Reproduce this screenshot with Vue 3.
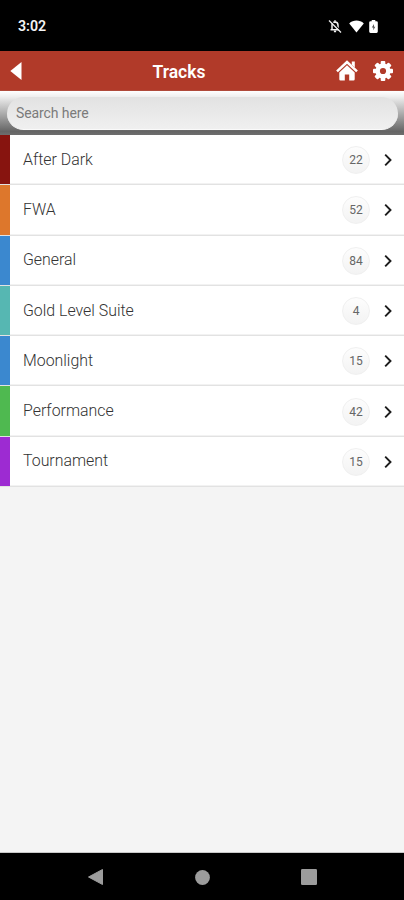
<script setup>
const tracks = [
  { name: 'After Dark', count: 22, color: '#87140f' },
  { name: 'FWA', count: 52, color: '#dd772c' },
  { name: 'General', count: 84, color: '#3b88cf' },
  { name: 'Gold Level Suite', count: 4, color: '#56b7b2' },
  { name: 'Moonlight', count: 15, color: '#3b88cf' },
  { name: 'Performance', count: 42, color: '#4fb950' },
  { name: 'Tournament', count: 15, color: '#9d2bd2' },
]
</script>

<template>
  <div class="screen">
    <div class="status">
      <span class="time">3:02</span>
      <div class="status-icons">
        <svg class="bell" viewBox="0 0 14 14" width="14" height="14">
          <path d="M2.500 10.800h9.200M4 10.500V6.200C4 4.400 5 3.200 7 3.100c2 .1 3 1.300 3 3.100v4.300M7 3.300V1.300M5.900 12.500h2.200" fill="none" stroke="#f0f0f0" stroke-width="1.500" />
          <path d="M1.800 .9l11.500 11.500" stroke="#000" stroke-width="1.300" />
          <path d="M1 1.500l12 12" stroke="#f0f0f0" stroke-width="1.200" />
        </svg>
        <svg class="wifi" viewBox="0 0 15 13" width="15" height="13">
          <path d="M.2 3.400C4.300-.4 10.700-.4 14.800 3.400L7.500 12.600z" fill="#fff" />
        </svg>
        <svg class="battery" viewBox="0 0 9 13" width="9" height="13">
          <path d="M2.700 0h3.600v1.300H7.500a1.300 1.300 0 0 1 1.300 1.300v9A1.300 1.300 0 0 1 7.500 12.900h-6A1.300 1.300 0 0 1 .2 11.600v-9a1.300 1.300 0 0 1 1.300-1.300h1.200z" fill="#fff" />
          <path d="M5 4L2.800 7.600h1.500v2.700L6.300 6.800H5z" fill="#555" />
        </svg>
      </div>
    </div>

    <header class="header">
      <svg class="back" viewBox="0 0 12 18" width="12" height="18">
        <path d="M11.500 0v18L.3 9z" fill="#fff" />
      </svg>
      <h1 class="title">Tracks</h1>
      <div class="actions">
        <svg viewBox="0 0 22 21" width="22" height="21">
          <path d="M1 11.400L11 2l10 9.400" fill="none" stroke="#fff" stroke-width="2.500" />
          <path d="M15.800 1.500h3v6l-3-2.800z" fill="#fff" />
          <path d="M11 5.200l7.700 7.200v6.900q0 1.200-1.200 1.200h-4.300v-6H8.800v6H4.500q-1.200 0-1.200-1.200v-6.900z" fill="#fff" />
        </svg>
        <svg viewBox="-10 -10 20 20" width="20" height="20">
          <g fill="#fff">
            <rect v-for="i in 4" :key="i" x="-2.300" y="-10" width="4.600" height="20" rx="1" :transform="`rotate(${i * 45})`" />
            <circle r="7.600" />
          </g>
          <circle r="3.100" fill="#b13a29" />
        </svg>
      </div>
    </header>

    <div class="search">
      <input class="search-input" type="text" placeholder="Search here" />
    </div>

    <ul class="list">
      <li v-for="track in tracks" :key="track.name" class="row">
        <span class="stripe" :style="{ background: track.color }"></span>
        <span class="name">{{ track.name }}</span>
        <span class="count">{{ track.count }}</span>
        <svg class="chevron" viewBox="0 0 8 12" width="8" height="12">
          <path d="M1.200 .7L6.500 6 1.200 11.300" fill="none" stroke="#1c1c1c" stroke-width="1.900" />
        </svg>
      </li>
    </ul>

    <nav class="nav">
      <svg viewBox="0 0 15 16" width="15" height="16"><path d="M14.500.5v15L.5 8z" fill="#9c9c9c" stroke="#9c9c9c" stroke-linejoin="round" /></svg>
      <svg viewBox="0 0 15 15" width="15" height="15"><circle cx="7.500" cy="7.500" r="7.400" fill="#9c9c9c" /></svg>
      <svg viewBox="0 0 16 16" width="16" height="16"><rect width="16" height="16" rx="1.200" fill="#9c9c9c" /></svg>
    </nav>
  </div>
</template>

<style>
body {
  background: #f4f4f4;
}
</style>

<style scoped>
.screen {
  display: flex;
  flex-direction: column;
  width: 404px;
  height: 900px;
  overflow: hidden;
  background: #f4f4f4;
  font-family: Roboto, "Liberation Sans", sans-serif;
}
.screen * {
  box-sizing: border-box;
}
svg {
  display: block;
  flex: none;
}
.status {
  flex: none;
  display: flex;
  align-items: center;
  justify-content: space-between;
  height: 51px;
  padding: 1px 26px 0 18px;
  background: #000;
}
.time {
  color: #f4f4f4;
  font-size: 14.200px;
  font-weight: 600;
}
.status-icons {
  display: flex;
  align-items: center;
}
.bell {
  margin-right: 1px;
}
.wifi {
  margin-left: 6px;
}
.battery {
  margin-left: 5px;
}
.header {
  flex: none;
  display: grid;
  grid-template-columns: 1fr auto 1fr;
  align-items: center;
  height: 40px;
  padding: 0 11px 0 10px;
  background: #b13a29;
  border-bottom: 1px solid #b04a3b;
}
.title {
  margin: 3px 0 0 -45px;
  color: #fff;
  font-size: 17.500px;
  line-height: 20px;
  font-weight: 600;
}
.actions {
  display: flex;
  align-items: center;
  justify-content: flex-end;
  gap: 15px;
}
.search {
  flex: none;
  height: 44px;
  padding: 6px 6px 0 7px;
  background: linear-gradient(#fff 0%, #f0f0f0 12%, #656565 92%, #6e6e6e 100%);
}
.search-input {
  display: block;
  width: 100%;
  height: 33px;
  padding: 0 9px;
  border: 0;
  border-bottom: 1px solid #fafafa;
  border-radius: 17px;
  outline: 0;
  background: linear-gradient(#e2e2e2, #f0f0f0);
  font-family: inherit;
  font-size: 14px;
  letter-spacing: -0.100px;
  color: #777;
}
.search-input::placeholder {
  color: #7b7b7b;
  opacity: 1;
}
.list {
  flex: none;
  margin: 0;
  padding: 0;
  list-style: none;
}
.row {
  display: flex;
  align-items: center;
  height: 50.300px;
  padding-right: 12px;
  background: #fff;
  box-shadow: inset 0 -1px 0 #e2e2e2, inset 0 -2px 0 #f2f2f2;
}
.stripe {
  align-self: stretch;
  width: 10px;
  margin-bottom: 1px;
}
.name {
  flex: 1;
  padding: 0 0 2px 13px;
  color: #333;
  font-size: 15.900px;
  font-weight: 300;
}
.count {
  display: flex;
  align-items: center;
  justify-content: center;
  width: 28px;
  height: 28px;
  border: 1px solid #f0f0f0;
  border-radius: 50%;
  background: linear-gradient(#fdfdfd, #f3f3f3);
  color: #666;
  font-size: 12px;
}
.chevron {
  margin-left: 14px;
}
.nav {
  flex: none;
  display: flex;
  align-items: center;
  justify-content: space-between;
  height: 47px;
  margin-top: auto;
  padding: 1px 87px 0 88px;
  background: #000;
  box-shadow: 0 -1px 0 #c8c8c8;
}
</style>
